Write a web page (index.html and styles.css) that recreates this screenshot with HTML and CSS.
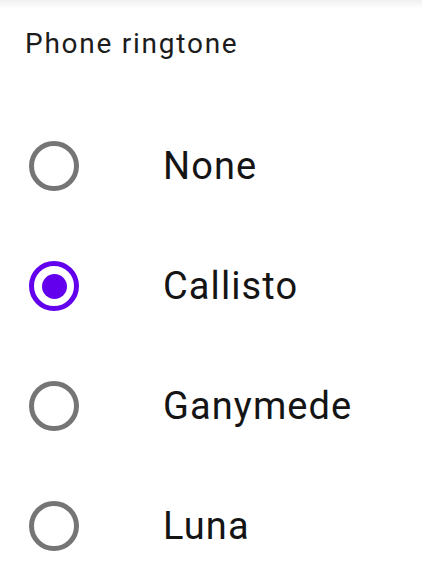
FILE: index.html
```html
<!DOCTYPE html>
<html>
<head>
<meta charset="utf-8">
<link rel="stylesheet" href="styles.css">
</head>
<body>
<div class="shade"></div>
<div class="dialog">
  <div class="title">Phone ringtone</div>
  <div class="options">
    <div class="option"><span class="radio"></span><span class="label">None</span></div>
    <div class="option"><span class="radio checked"></span><span class="label">Callisto</span></div>
    <div class="option"><span class="radio"></span><span class="label">Ganymede</span></div>
    <div class="option"><span class="radio"></span><span class="label">Luna</span></div>
  </div>
</div>
</body>
</html>
```
FILE: styles.css
```css
html, body {
  margin: 0;
  padding: 0;
  background: #ffffff;
  overflow: hidden;
}
body {
  width: 422px;
  height: 570px;
  position: relative;
  font-family: Roboto, "Noto Sans", sans-serif;
  color: #1f1f1f;
}
.shade {
  position: absolute;
  left: 0;
  top: 0;
  width: 100%;
  height: 9px;
  background: linear-gradient(to bottom, #f0f0f0, rgba(255,255,255,0));
}
.dialog {
  display: flex;
  flex-direction: column;
}
.title {
  padding: 28px 0 0 25px;
  font-size: 28px;
  line-height: 32px;
  letter-spacing: 1.75px;
  color: #1c1c1c;
}
.options {
  display: flex;
  flex-direction: column;
  padding-top: 46px;
}
.option {
  height: 120px;
  display: flex;
  align-items: center;
  padding-left: 29px;
  gap: 84px;
}
.radio {
  box-sizing: border-box;
  width: 50px;
  height: 50px;
  border: 5px solid #757575;
  border-radius: 50%;
  display: flex;
  align-items: center;
  justify-content: center;
  flex: none;
}
.radio.checked {
  border-color: #6200ee;
}
.radio.checked::after {
  content: "";
  width: 25px;
  height: 25px;
  border-radius: 50%;
  background: #6200ee;
}
.label {
  font-size: 38px;
  color: #141414;
  letter-spacing: 1.1px;
}
```
